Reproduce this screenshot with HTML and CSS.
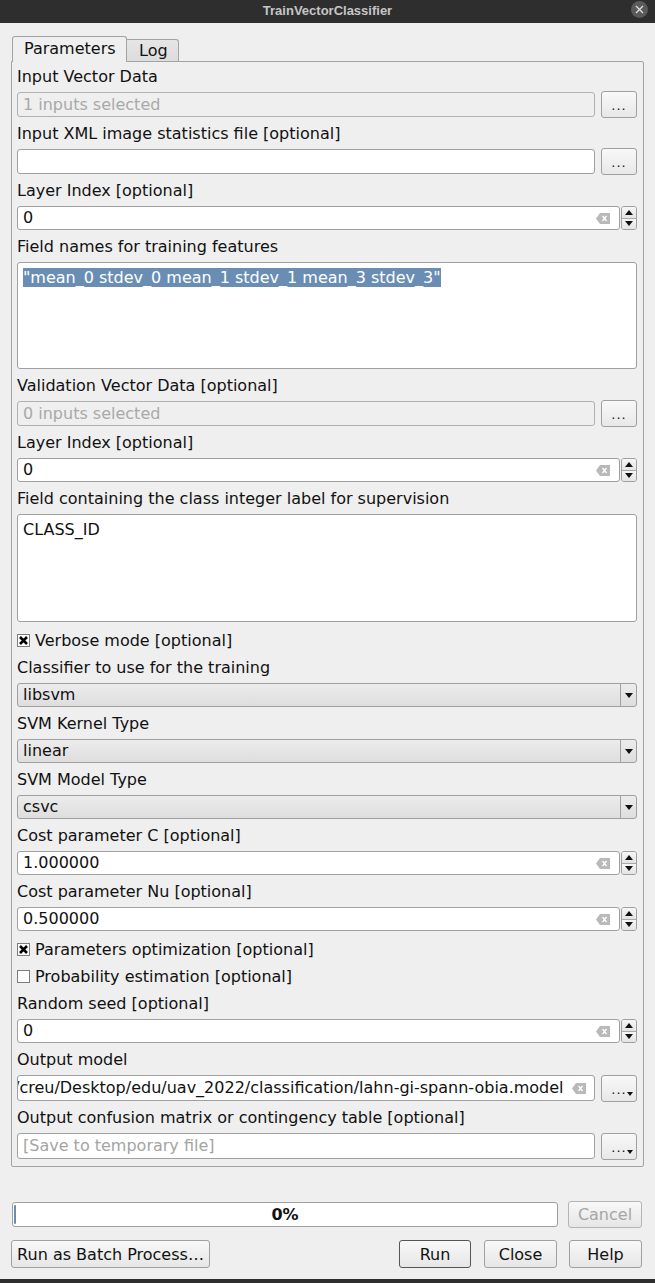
FILE: index.html
```html
<!DOCTYPE html>
<html>
<head>
<meta charset="utf-8">
<title>TrainVectorClassifier</title>
<link rel="stylesheet" href="styles.css">
</head>
<body>
<div class="titlebar">
  <span class="title">TrainVectorClassifier</span>
  <span class="close"><svg width="9" height="9" viewBox="0 0 9 9"><path d="M1 1 L8 8 M8 1 L1 8" stroke="#e0e0e0" stroke-width="1.3" fill="none"/></svg></span>
</div>
<div class="dialog">
  <div class="tabs">
    <div class="tab active">Parameters</div>
    <div class="tab">Log</div>
  </div>
  <div class="pane">
    <div class="label">Input Vector Data</div>
    <div class="row">
      <div class="edit disabled">1 inputs selected</div>
      <div class="tool">...</div>
    </div>
    <div class="label">Input XML image statistics file [optional]</div>
    <div class="row">
      <div class="edit"></div>
      <div class="tool">...</div>
    </div>
    <div class="label">Layer Index [optional]</div>
    <div class="spin">
      <div class="edit spin-edit"><span class="val">0</span><span class="clear"><svg width="14" height="11" viewBox="0 0 14 11"><path d="M4 0 H14 V11 H4 L0 5.5 Z" fill="#b9b9b9"/><path d="M6.5 3 L10.5 8 M10.5 3 L6.5 8" stroke="#fff" stroke-width="1.3"/></svg></span></div>
      <div class="arrows"><div class="arr up"><svg width="8" height="5" viewBox="0 0 8 5"><path d="M0 5 L4 0 L8 5 Z" fill="#111"/></svg></div><div class="arr down"><svg width="8" height="5" viewBox="0 0 8 5"><path d="M0 0 L4 5 L8 0 Z" fill="#111"/></svg></div></div>
    </div>
    <div class="label">Field names for training features</div>
    <div class="textarea"><span class="sel">"mean_0 stdev_0 mean_1 stdev_1 mean_3 stdev_3"</span></div>
    <div class="label">Validation Vector Data [optional]</div>
    <div class="row">
      <div class="edit disabled">0 inputs selected</div>
      <div class="tool">...</div>
    </div>
    <div class="label">Layer Index [optional]</div>
    <div class="spin">
      <div class="edit spin-edit"><span class="val">0</span><span class="clear"><svg width="14" height="11" viewBox="0 0 14 11"><path d="M4 0 H14 V11 H4 L0 5.5 Z" fill="#b9b9b9"/><path d="M6.5 3 L10.5 8 M10.5 3 L6.5 8" stroke="#fff" stroke-width="1.3"/></svg></span></div>
      <div class="arrows"><div class="arr up"><svg width="8" height="5" viewBox="0 0 8 5"><path d="M0 5 L4 0 L8 5 Z" fill="#111"/></svg></div><div class="arr down"><svg width="8" height="5" viewBox="0 0 8 5"><path d="M0 0 L4 5 L8 0 Z" fill="#111"/></svg></div></div>
    </div>
    <div class="label">Field containing the class integer label for supervision</div>
    <div class="textarea tall"><span class="plain">CLASS_ID</span></div>
    <div class="check first"><span class="box"><svg width="11" height="11" viewBox="0 0 11 11"><path d="M2 2 L9 9 M9 2 L2 9" stroke="#000" stroke-width="2.6"/></svg></span>Verbose mode [optional]</div>
    <div class="label">Classifier to use for the training</div>
    <div class="combo"><span class="ctext">libsvm</span><span class="carrow"><svg width="8" height="5" viewBox="0 0 8 5"><path d="M0 0 L4 5 L8 0 Z" fill="#111"/></svg></span></div>
    <div class="label">SVM Kernel Type</div>
    <div class="combo"><span class="ctext">linear</span><span class="carrow"><svg width="8" height="5" viewBox="0 0 8 5"><path d="M0 0 L4 5 L8 0 Z" fill="#111"/></svg></span></div>
    <div class="label">SVM Model Type</div>
    <div class="combo"><span class="ctext">csvc</span><span class="carrow"><svg width="8" height="5" viewBox="0 0 8 5"><path d="M0 0 L4 5 L8 0 Z" fill="#111"/></svg></span></div>
    <div class="label">Cost parameter C [optional]</div>
    <div class="spin">
      <div class="edit spin-edit"><span class="val">1.000000</span><span class="clear"><svg width="14" height="11" viewBox="0 0 14 11"><path d="M4 0 H14 V11 H4 L0 5.5 Z" fill="#b9b9b9"/><path d="M6.5 3 L10.5 8 M10.5 3 L6.5 8" stroke="#fff" stroke-width="1.3"/></svg></span></div>
      <div class="arrows"><div class="arr up"><svg width="8" height="5" viewBox="0 0 8 5"><path d="M0 5 L4 0 L8 5 Z" fill="#111"/></svg></div><div class="arr down"><svg width="8" height="5" viewBox="0 0 8 5"><path d="M0 0 L4 5 L8 0 Z" fill="#111"/></svg></div></div>
    </div>
    <div class="label">Cost parameter Nu [optional]</div>
    <div class="spin">
      <div class="edit spin-edit"><span class="val">0.500000</span><span class="clear"><svg width="14" height="11" viewBox="0 0 14 11"><path d="M4 0 H14 V11 H4 L0 5.5 Z" fill="#b9b9b9"/><path d="M6.5 3 L10.5 8 M10.5 3 L6.5 8" stroke="#fff" stroke-width="1.3"/></svg></span></div>
      <div class="arrows"><div class="arr up"><svg width="8" height="5" viewBox="0 0 8 5"><path d="M0 5 L4 0 L8 5 Z" fill="#111"/></svg></div><div class="arr down"><svg width="8" height="5" viewBox="0 0 8 5"><path d="M0 0 L4 5 L8 0 Z" fill="#111"/></svg></div></div>
    </div>
    <div class="check first"><span class="box"><svg width="11" height="11" viewBox="0 0 11 11"><path d="M2 2 L9 9 M9 2 L2 9" stroke="#000" stroke-width="2.6"/></svg></span>Parameters optimization [optional]</div>
    <div class="check"><span class="box"></span>Probability estimation [optional]</div>
    <div class="label">Random seed [optional]</div>
    <div class="spin">
      <div class="edit spin-edit"><span class="val">0</span><span class="clear"><svg width="14" height="11" viewBox="0 0 14 11"><path d="M4 0 H14 V11 H4 L0 5.5 Z" fill="#b9b9b9"/><path d="M6.5 3 L10.5 8 M10.5 3 L6.5 8" stroke="#fff" stroke-width="1.3"/></svg></span></div>
      <div class="arrows"><div class="arr up"><svg width="8" height="5" viewBox="0 0 8 5"><path d="M0 5 L4 0 L8 5 Z" fill="#111"/></svg></div><div class="arr down"><svg width="8" height="5" viewBox="0 0 8 5"><path d="M0 0 L4 5 L8 0 Z" fill="#111"/></svg></div></div>
    </div>
    <div class="label">Output model</div>
    <div class="row out">
      <div class="edit path-edit"><span class="path">/creu/Desktop/edu/uav_2022/classification/lahn-gi-spann-obia.model</span><span class="clear"><svg width="14" height="11" viewBox="0 0 14 11"><path d="M4 0 H14 V11 H4 L0 5.5 Z" fill="#b9b9b9"/><path d="M6.5 3 L10.5 8 M10.5 3 L6.5 8" stroke="#fff" stroke-width="1.3"/></svg></span></div>
      <div class="tool menu">...<svg class="mini" width="6" height="4" viewBox="0 0 6 4"><path d="M0 0 L3 4 L6 0 Z" fill="#111"/></svg></div>
    </div>
    <div class="label">Output confusion matrix or contingency table [optional]</div>
    <div class="row out">
      <div class="edit placeholder">[Save to temporary file]</div>
      <div class="tool menu">...<svg class="mini" width="6" height="4" viewBox="0 0 6 4"><path d="M0 0 L3 4 L6 0 Z" fill="#111"/></svg></div>
    </div>
  </div>
  <div class="progress-row">
    <div class="progress"><span class="pbar"></span><span class="ptext">0%</span></div>
    <div class="btn cancel">Cancel</div>
  </div>
  <div class="button-row">
    <div class="btn batch">Run as Batch Process…</div>
    <div class="spacer"></div>
    <div class="btn run">Run</div>
    <div class="btn close-btn">Close</div>
    <div class="btn help">Help</div>
  </div>
</div>
<div class="bottom-edge"></div>
</body>
</html>
```
FILE: styles.css
```css
* { box-sizing: border-box; }
html, body { margin: 0; padding: 0; }
body {
  width: 655px;
  height: 1283px;
  background: #efefef;
  font-family: "DejaVu Sans", sans-serif;
  font-size: 16px;
  color: #111;
  overflow: hidden;
  position: relative;
}
.titlebar {
  height: 23px;
  background: #2e2e2e;
  display: flex;
  align-items: center;
  justify-content: center;
  position: relative;
}
.title {
  font-family: "Liberation Sans", sans-serif;
  font-weight: bold;
  font-size: 13px;
  color: #c6c6c6;
  margin-top: -2px;
}
.close {
  position: absolute;
  right: 7px;
  top: 1px;
  width: 17px;
  height: 17px;
  border-radius: 50%;
  background: #5a5a5a;
  display: flex;
  align-items: center;
  justify-content: center;
}
.dialog {
  padding: 13px 11px 0 11px;
}
.tabs {
  display: flex;
  align-items: flex-end;
  height: 25px;
  padding-left: 1px;
  position: relative;
  z-index: 2;
}
.tab {
  height: 22px;
  border: 1px solid #a3a3a3;
  border-bottom: none;
  border-radius: 3px 3px 0 0;
  background: linear-gradient(#e6e6e6, #dcdcdc);
  line-height: 21px;
  padding: 0 11px;
  white-space: nowrap;
}
.tab.active {
  height: 26px;
  width: 115px;
  background: #efefef;
  line-height: 24px;
  margin-bottom: -1px;
  padding: 0 11px;
}
.tab + .tab {
  width: 52px;
  border-left: none;
  border-radius: 0 3px 0 0;
  padding: 0 0 0 12px;
}
.pane {
  border: 1px solid #a3a3a3;
  border-radius: 0 2px 2px 2px;
  padding: 4px 6px 7px 5px;
  display: flex;
  flex-direction: column;
  gap: 6px;
  position: relative;
  z-index: 1;
}
.label {
  height: 20px;
  line-height: 21px;
  white-space: nowrap;
}
.row {
  display: flex;
  gap: 6px;
  height: 25px;
  align-items: center;
}
.row.out { height: 26px; }
.edit {
  flex: 1;
  height: 25px;
  border: 1px solid #a0a0a0;
  border-radius: 3px;
  background: #fff;
  padding: 0 5px;
  line-height: 23px;
  white-space: nowrap;
  overflow: hidden;
}
.row.out .edit { height: 26px; line-height: 24px; }
.edit.disabled {
  background: #efefef;
  color: #a9a9a9;
  border-color: #b0b0b0;
}
.edit.placeholder { color: #a4a4a4; }
.tool {
  width: 36px;
  height: 27px;
  margin: -1px 0;
  border: 1px solid #a0a0a0;
  border-radius: 3px;
  background: linear-gradient(#f8f8f8, #e8e8e8);
  font-size: 13px;
  text-align: center;
  line-height: 28px;
  letter-spacing: 1px;
  position: relative;
}
.tool .mini {
  position: absolute;
  right: 3px;
  bottom: 5px;
}
.spin {
  display: flex;
  height: 24px;
}
.spin-edit {
  height: 24px;
  line-height: 22px;
  display: flex;
  align-items: center;
  justify-content: space-between;
  padding-right: 9px;
}
.path-edit {
  display: flex;
  align-items: center;
  justify-content: space-between;
  padding-left: 0;
  padding-right: 8px;
}
.path {
  margin-left: -4px;
  white-space: nowrap;
}
.clear {
  display: flex;
  flex: none;
}
.arrows {
  width: 16px;
  height: 24px;
  margin-left: 1px;
  border: 1px solid #a0a0a0;
  border-radius: 3px;
  display: flex;
  flex-direction: column;
  overflow: hidden;
}
.arr {
  flex: 1;
  display: flex;
  align-items: center;
  justify-content: center;
  background: linear-gradient(#f6f6f6, #e4e4e4);
}
.arr.up { border-bottom: 1px solid #a8a8a8; }
.textarea {
  height: 107px;
  border: 1px solid #a0a0a0;
  border-radius: 3px;
  background: #fff;
  padding: 5px 5px;
  line-height: 19px;
  white-space: nowrap;
}
.textarea.tall { height: 108px; }
.sel {
  background: #6a8db4;
  color: #fff;
  display: inline-block;
  height: 19px;
}
.plain { display: inline-block; height: 19px; }
.check {
  height: 21px;
  display: flex;
  align-items: center;
  gap: 5px;
  white-space: nowrap;
}
.check.first { margin-top: 2px; }
.box {
  width: 13px;
  height: 13px;
  border: 1px solid #7d7d7d;
  background: #fff;
  display: flex;
  align-items: center;
  justify-content: center;
  flex: none;
}
.combo {
  height: 24px;
  border: 1px solid #a0a0a0;
  border-radius: 3px;
  background: linear-gradient(#ececec, #dedede);
  display: flex;
  align-items: center;
}
.ctext {
  flex: 1;
  padding-left: 5px;
  line-height: 22px;
}
.carrow {
  width: 16px;
  height: 22px;
  border-left: 1px solid #a0a0a0;
  display: flex;
  align-items: center;
  justify-content: center;
}
.progress-row {
  display: flex;
  gap: 10px;
  margin: 35px 2px 0 1px;
  align-items: center;
  height: 25px;
}
.progress {
  flex: 1;
  height: 25px;
  border: 1px solid #a0a0a0;
  border-radius: 3px;
  background: #fff;
  position: relative;
  display: flex;
  align-items: center;
  justify-content: center;
}
.pbar {
  position: absolute;
  left: 1px;
  top: 2px;
  bottom: 2px;
  width: 2px;
  background: #6a8db4;
  border-radius: 1px;
}
.ptext { font-weight: bold; }
.btn {
  height: 28px;
  border: 1px solid #a0a0a0;
  border-radius: 3px;
  background: linear-gradient(#f8f8f8, #e6e6e6);
  display: flex;
  align-items: center;
  justify-content: center;
  white-space: nowrap;
}
.cancel {
  width: 74px;
  height: 27px;
  color: #a6a6a6;
  border-color: #b4b4b4;
}
.button-row {
  display: flex;
  gap: 12px;
  margin: 13px 2px 0 0;
}
.batch { width: 199px; }
.spacer { flex: 1; }
.run { width: 72px; border-color: #555; }
.close-btn { width: 73px; margin-left: 1px; }
.help { width: 73px; }
.bottom-edge {
  position: absolute;
  left: 0;
  right: 0;
  bottom: 0;
  height: 4px;
  background: #2e2e2e;
}
```
